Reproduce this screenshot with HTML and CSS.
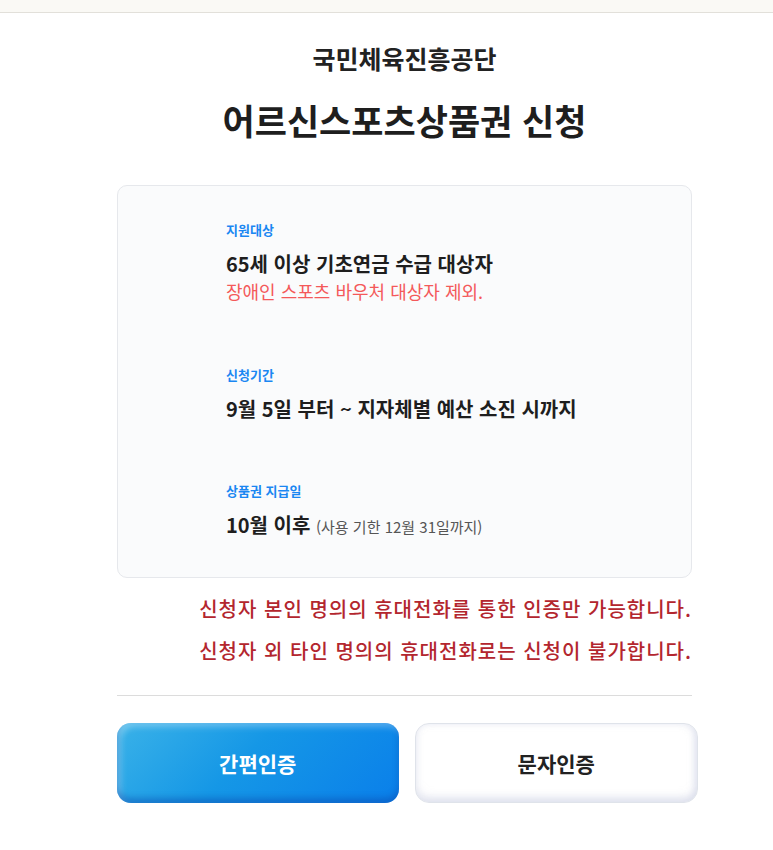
FILE: index.html
```html
<!DOCTYPE html>
<html lang="ko">
<head>
    <meta charset="UTF-8">
    <meta name="viewport" content="width=device-width, initial-scale=1.0">
    <title>어르신스포츠상품권 신청</title>
    <link rel="stylesheet" href="styles.css">
</head>
<body>
    <div class="topbar"></div>

    <div class="container">
        <h2 class="org">국민체육진흥공단</h2>
        <h1 class="title">어르신스포츠상품권 신청</h1>

        <div class="info-card">
            <div class="info-item">
                <p class="label">지원대상</p>
                <p class="value">65세 이상 기초연금 수급 대상자</p>
                <p class="except">장애인 스포츠 바우처 대상자 제외.</p>
            </div>
            <div class="info-item second">
                <p class="label">신청기간</p>
                <p class="value">9월 5일 부터 ~ 지자체별 예산 소진 시까지</p>
            </div>
            <div class="info-item third">
                <p class="label">상품권 지급일</p>
                <p class="value">10월 이후 <span class="sub">(사용 기한 12월 31일까지)</span></p>
            </div>
        </div>

        <div class="notice">
            <p>신청자 본인 명의의 휴대전화를 통한 인증만 가능합니다.</p>
            <p>신청자 외 타인 명의의 휴대전화로는 신청이 불가합니다.</p>
        </div>

        <hr class="divider">

        <div class="buttons">
            <button class="btn btn-blue">간편인증</button>
            <button class="btn btn-white">문자인증</button>
        </div>
    </div>
</body>
</html>
```

FILE: styles.css
```css
body {
    margin: 0;
    background-color: #fff;
    color: #222;
    font-family: "Noto Sans CJK KR", "Noto Sans", sans-serif;
}

p {
    margin: 0;
}

.topbar {
    height: 12px;
    background-color: #faf9f5;
    border-bottom: 1px solid #e2e0da;
}

.container {
    width: 575px;
    margin-left: 117px;
}

.org {
    margin: 30px 0 0;
    font-size: 25px;
    line-height: 30px;
    font-weight: 700;
    text-align: center;
    color: #222;
}

.title {
    margin: 25px 0 0;
    font-size: 35px;
    line-height: 44px;
    font-weight: 700;
    text-align: center;
    color: #1e1e1e;
}

.info-card {
    margin-top: 43px;
    padding: 35px 20px 37px 108px;
    border: 1px solid #e6e8ec;
    border-radius: 10px;
    background-color: #fafbfc;
}

.info-item.second {
    margin-top: 63px;
}

.info-item.third {
    margin-top: 60px;
}

.label {
    font-size: 13px;
    line-height: 18px;
    font-weight: 700;
    color: #1a87f2;
}

.value {
    margin-top: 12px;
    font-size: 20px;
    line-height: 26px;
    font-weight: 700;
    color: #1e1e1e;
}

.value .sub {
    font-size: 15px;
    font-weight: 400;
    color: #555;
}

.except {
    margin-top: 2px;
    font-size: 18px;
    line-height: 24px;
    color: #f4595a;
}

.notice {
    margin-top: 17px;
    text-align: right;
}

.notice p {
    font-size: 20px;
    line-height: 28px;
    font-weight: 500;
    letter-spacing: 1px;
    color: #b3262e;
}

.notice p + p {
    margin-top: 14px;
}

.divider {
    margin: 30px 0 0;
    border: none;
    border-top: 1px solid #dcdcdc;
}

.buttons {
    display: flex;
    gap: 16px;
    width: 581px;
    margin-top: 27px;
}

.btn {
    flex: 1;
    height: 80px;
    border-radius: 14px;
    font-family: inherit;
    font-size: 21px;
    font-weight: 700;
    cursor: pointer;
}

.btn-blue {
    border: none;
    color: #fff;
    background: linear-gradient(135deg, #3ab2e8 0%, #1597e6 45%, #0a7fea 100%);
    box-shadow: inset 0 -5px 6px rgba(10, 70, 170, 0.45), inset 4px 4px 6px rgba(255, 255, 255, 0.3);
}

.btn-white {
    border: 1px solid #dfe3ea;
    color: #222;
    background-color: #fff;
    box-shadow: inset 0 -5px 8px rgba(205, 210, 228, 0.55), inset -3px 0 6px rgba(215, 220, 235, 0.5);
}
```
